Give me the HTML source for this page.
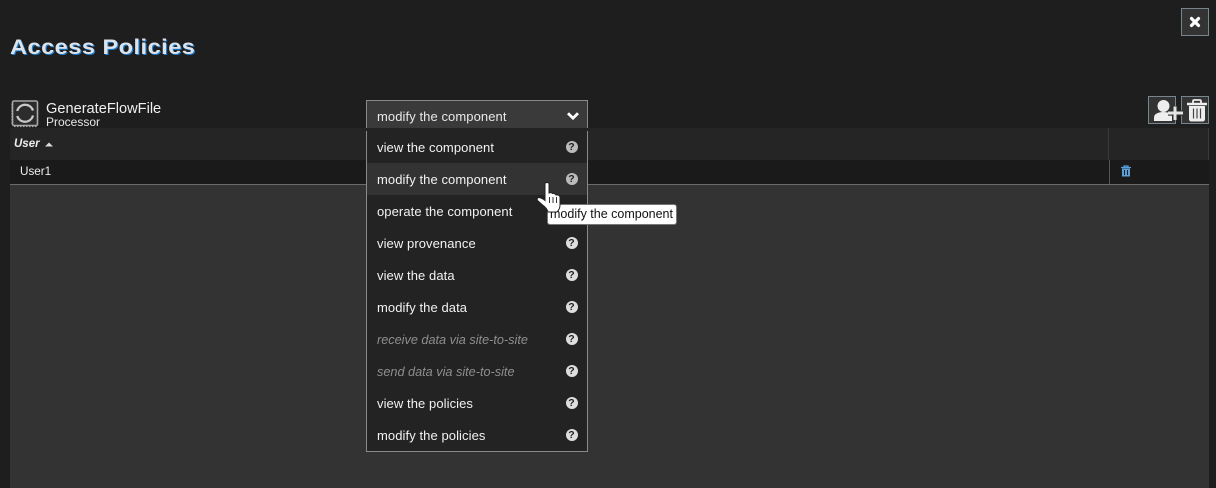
<!DOCTYPE html>
<html><head><meta charset="utf-8"><style>
html,body{margin:0;padding:0;background:#1e1e1e}
#p{position:relative;width:1216px;height:488px;overflow:hidden;background:#1e1e1e;font-family:"Liberation Sans",sans-serif;color:#fff}
#p div,#p svg{position:absolute}
.t{white-space:nowrap;line-height:16px}
.it{left:367px;width:220px;height:32px;background:#232323}
.lb{left:10px;top:8.5px;font-size:13px;letter-spacing:.08px;line-height:16px;color:#f2f2f2;white-space:nowrap}
.q{left:198.500px;top:10px;width:12px;height:12px;border-radius:50%;background:#ddd;color:#232323;font:bold 10.5px/12px "Liberation Sans",sans-serif;text-align:center}
.g .q{background:#bbb}
.dis .lb{font-style:italic;color:#8f8f8f;font-size:12.7px;letter-spacing:0}
.btn{background:#333;border:1px solid #77858e;box-sizing:border-box}
</style></head><body><div id="p">
<div class="t" style="left:10px;top:34px;font-size:21px;line-height:28px;font-weight:bold;letter-spacing:.45px;color:#dde3ea;text-shadow:1px 1px 0 #1b7fd4;transform:scaleX(1.12);transform-origin:0 50%">Access Policies</div>

<div class="btn" style="left:1181px;top:8px;width:28px;height:28px"></div>
<svg style="left:1188px;top:15px" width="14" height="14" viewBox="0 0 14 14"><path d="M3.500 3.500L10.500 10.500M10.500 3.500L3.500 10.500" stroke="#fff" stroke-width="3.200" stroke-linecap="round"/></svg>

<svg style="left:11px;top:100px" width="28" height="28" viewBox="0 0 28 28"><rect x="1.500" y="1" width="25" height="24.500" rx="1.500" fill="#2c2c2c" stroke="#a8a8a8" stroke-width="1.600"/><path d="M1 4V24M3 26.500H26" stroke="#a8a8a8" stroke-width="1.200" stroke-dasharray="1.500 1.500" fill="none"/><path d="M6.200 11A8.200 8.200 0 0 1 22 10.500" fill="none" stroke="#c9c9c9" stroke-width="2.200"/><path d="M22 15.500A8.200 8.200 0 0 1 6.200 16" fill="none" stroke="#c9c9c9" stroke-width="2.200"/></svg>
<div class="t" style="left:46px;top:101px;font-size:14.6px;color:#f0f0f0">GenerateFlowFile</div>
<div class="t" style="left:46px;top:114px;font-size:12px;color:#e6e6e6">Processor</div>

<div class="btn" style="left:1148px;top:96px;width:28px;height:28px"></div>
<div class="btn" style="left:1181px;top:96px;width:28px;height:28px"></div>
<svg style="left:1152px;top:98px" width="33" height="26" viewBox="0 0 33 26"><circle cx="11.500" cy="8" r="6" fill="#eee"/><path d="M2 23V19.500C2 16 6 14 11.500 14C16 14 19 15.500 20 18V23Z" fill="#eee"/><path d="M23 8V22M16 15H31" stroke="#2a2a2a" stroke-width="5.500" opacity=".85"/><path d="M23 8.500V22M16 15H31" stroke="#e4e4e4" stroke-width="3"/></svg>
<svg style="left:1186px;top:99px" width="22" height="24" viewBox="0 0 22 24"><path d="M1 5H21" stroke="#eee" stroke-width="2.500"/><path d="M7 4V2.200Q7 1 8.500 1H13.500Q15 1 15 2.200V4" fill="none" stroke="#eee" stroke-width="1.800"/><path d="M3 7H19V20Q19 22.500 16.500 22.500H5.500Q3 22.500 3 20Z" fill="#eee"/><path d="M7.500 9.500V19.500M11 9.500V19.500M14.500 9.500V19.500" stroke="#444" stroke-width="1.200"/></svg>

<div style="left:10px;top:128px;width:1199px;height:360px;background:#333"></div>
<div style="left:10px;top:128px;width:1199px;height:32px;background:#252525"></div>
<div style="left:1108px;top:128px;width:1px;height:32px;background:#3a3a3a"></div>
<div style="left:1208px;top:128px;width:1px;height:32px;background:#3a3a3a"></div>
<div class="t" style="left:14px;top:136px;font-size:11.5px;font-weight:bold;font-style:italic;color:#eee">User</div>
<svg style="left:45px;top:142px" width="8" height="5" viewBox="0 0 8 5"><path d="M0 4.500L4 .5L8 4.500Z" fill="#ddd"/></svg>
<div style="left:10px;top:160px;width:1199px;height:24px;background:#1a1a1a"></div>
<div style="left:10px;top:184px;width:1199px;height:1px;background:#6c6c70"></div>
<div style="left:1109px;top:160px;width:1px;height:24px;background:#55555a"></div>
<div class="t" style="left:20px;top:164px;font-size:11.7px;color:#eee">User1</div>
<svg style="left:1121px;top:165px" width="10" height="12" viewBox="0 0 10 12"><path d="M0 2.500H10M3 2V1H7V2" stroke="#5a9fd8" stroke-width="1.200" fill="none"/><path d="M1 3.500H9V11.500H1Z" fill="#5a9fd8"/><path d="M3.500 5V10M6.500 5V10" stroke="#1a1a1a" stroke-width="1"/></svg>

<div style="left:366px;top:100px;width:222px;height:352px;box-sizing:border-box;border:1px solid #8a8a8a;background:#232323"></div>
<div style="left:367px;top:101px;width:220px;height:27px;background:#3a3a3a"></div>
<div class="lb" style="left:377px;top:108.500px;color:#e8e8e8">modify the component</div>
<svg style="left:566px;top:111px" width="14" height="10" viewBox="0 0 14 10"><path d="M2 2.200L7 7.200L12 2.200" fill="none" stroke="#fff" stroke-width="2.800"/></svg>
<div style="left:366px;top:128px;width:222px;height:3px;background:#232323"></div>

<div class="it g" style="top:131px"><div class="lb">view the component</div><div class="q">?</div></div>
<div class="it g" style="top:163px;background:#333"><div class="lb">modify the component</div><div class="q">?</div></div>
<div class="it" style="top:195px"><div class="lb">operate the component</div><div class="q">?</div></div>
<div class="it" style="top:227px"><div class="lb">view provenance</div><div class="q">?</div></div>
<div class="it" style="top:259px"><div class="lb">view the data</div><div class="q">?</div></div>
<div class="it" style="top:291px"><div class="lb">modify the data</div><div class="q">?</div></div>
<div class="it dis" style="top:323px"><div class="lb">receive data via site-to-site</div><div class="q">?</div></div>
<div class="it dis" style="top:355px"><div class="lb">send data via site-to-site</div><div class="q">?</div></div>
<div class="it" style="top:387px"><div class="lb">view the policies</div><div class="q">?</div></div>
<div class="it" style="top:419px"><div class="lb">modify the policies</div><div class="q">?</div></div>

<div class="t" style="left:547px;top:204px;width:130px;height:21px;box-sizing:border-box;background:#fff;border:1px solid #777;border-radius:3px;color:#111;font-size:12.500px;line-height:19px;padding-left:2px">modify the component</div>
<svg style="left:535px;top:180px" width="30" height="36" viewBox="0 0 30 36"><path d="M10 4Q10 2.500 12 2.500Q14 2.500 14 4V13Q16 12 17.500 13.500Q20 13 21 15Q24 14.500 25 17V25Q25 29 22 32H13Q12 28 7 24.500L2.500 20.500Q1.500 17.500 4 17.500Q7 18 10 20.500Z" fill="#fff" stroke="#222" stroke-width="1"/><path d="M14.500 17V23M18 17V23M21.500 17V23" stroke="#333" stroke-width="1"/></svg>
</div></body></html>
